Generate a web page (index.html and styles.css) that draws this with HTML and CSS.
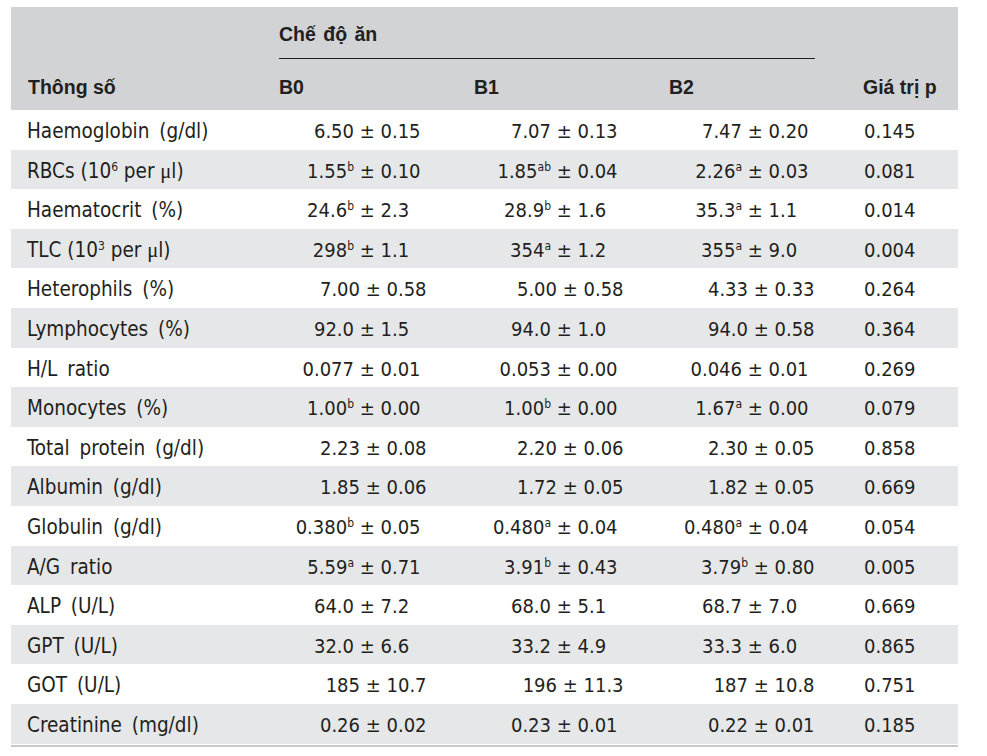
FILE: index.html
```html
<!DOCTYPE html>
<html lang="vi">
<head>
<meta charset="utf-8">
<title>Bảng chỉ số máu</title>
<link rel="stylesheet" href="styles.css">
</head>
<body>
<div class="tbl">
  <div class="thead">
    <div class="group">Chế độ ăn</div>
    <div class="h lab">Thông số</div>
    <div class="h">B0</div>
    <div class="h">B1</div>
    <div class="h">B2</div>
    <div class="h">Giá trị p</div>
  </div>
  <div class="tbody">
    <div class="row"><div class="lab">Haemoglobin (g/dl)</div><div class="v b0"><span class="m">6.50</span> ± 0.15</div><div class="v b1"><span class="m">7.07</span> ± 0.13</div><div class="v b2"><span class="m">7.47</span> ± 0.20</div><div class="p">0.145</div></div>
    <div class="row"><div class="lab tight">RBCs (10<span class="sup">6</span> per <span class="mu">μ</span>l)</div><div class="v b0"><span class="m">1.55<span class="sup">b</span></span> ± 0.10</div><div class="v b1"><span class="m">1.85<span class="sup">ab</span></span> ± 0.04</div><div class="v b2"><span class="m">2.26<span class="sup">a</span></span> ± 0.03</div><div class="p">0.081</div></div>
    <div class="row"><div class="lab">Haematocrit (%)</div><div class="v b0"><span class="m">24.6<span class="sup">b</span></span> ± 2.3</div><div class="v b1"><span class="m">28.9<span class="sup">b</span></span> ± 1.6</div><div class="v b2"><span class="m">35.3<span class="sup">a</span></span> ± 1.1</div><div class="p">0.014</div></div>
    <div class="row"><div class="lab tight">TLC (10<span class="sup">3</span> per <span class="mu">μ</span>l)</div><div class="v b0"><span class="m">298<span class="sup">b</span></span> ± 1.1</div><div class="v b1"><span class="m">354<span class="sup">a</span></span> ± 1.2</div><div class="v b2"><span class="m">355<span class="sup">a</span></span> ± 9.0</div><div class="p">0.004</div></div>
    <div class="row"><div class="lab">Heterophils (%)</div><div class="v b0 nudge"><span class="m">7.00</span> ± 0.58</div><div class="v b1 nudge"><span class="m">5.00</span> ± 0.58</div><div class="v b2 nudge"><span class="m">4.33</span> ± 0.33</div><div class="p">0.264</div></div>
    <div class="row"><div class="lab">Lymphocytes (%)</div><div class="v b0"><span class="m">92.0</span> ± 1.5</div><div class="v b1"><span class="m">94.0</span> ± 1.0</div><div class="v b2 nudge"><span class="m">94.0</span> ± 0.58</div><div class="p">0.364</div></div>
    <div class="row"><div class="lab">H/L ratio</div><div class="v b0"><span class="m">0.077</span> ± 0.01</div><div class="v b1"><span class="m">0.053</span> ± 0.00</div><div class="v b2"><span class="m">0.046</span> ± 0.01</div><div class="p">0.269</div></div>
    <div class="row"><div class="lab">Monocytes (%)</div><div class="v b0"><span class="m">1.00<span class="sup">b</span></span> ± 0.00</div><div class="v b1"><span class="m">1.00<span class="sup">b</span></span> ± 0.00</div><div class="v b2"><span class="m">1.67<span class="sup">a</span></span> ± 0.00</div><div class="p">0.079</div></div>
    <div class="row"><div class="lab">Total protein (g/dl)</div><div class="v b0 nudge"><span class="m">2.23</span> ± 0.08</div><div class="v b1 nudge"><span class="m">2.20</span> ± 0.06</div><div class="v b2 nudge"><span class="m">2.30</span> ± 0.05</div><div class="p">0.858</div></div>
    <div class="row"><div class="lab">Albumin (g/dl)</div><div class="v b0 nudge"><span class="m">1.85</span> ± 0.06</div><div class="v b1 nudge"><span class="m">1.72</span> ± 0.05</div><div class="v b2 nudge"><span class="m">1.82</span> ± 0.05</div><div class="p">0.669</div></div>
    <div class="row"><div class="lab">Globulin (g/dl)</div><div class="v b0"><span class="m">0.380<span class="sup">b</span></span> ± 0.05</div><div class="v b1"><span class="m">0.480<span class="sup">a</span></span> ± 0.04</div><div class="v b2"><span class="m">0.480<span class="sup">a</span></span> ± 0.04</div><div class="p">0.054</div></div>
    <div class="row"><div class="lab">A/G ratio</div><div class="v b0"><span class="m">5.59<span class="sup">a</span></span> ± 0.71</div><div class="v b1"><span class="m">3.91<span class="sup">b</span></span> ± 0.43</div><div class="v b2 nudge"><span class="m">3.79<span class="sup">b</span></span> ± 0.80</div><div class="p">0.005</div></div>
    <div class="row"><div class="lab">ALP (U/L)</div><div class="v b0"><span class="m">64.0</span> ± 7.2</div><div class="v b1"><span class="m">68.0</span> ± 5.1</div><div class="v b2"><span class="m">68.7</span> ± 7.0</div><div class="p">0.669</div></div>
    <div class="row"><div class="lab">GPT (U/L)</div><div class="v b0"><span class="m">32.0</span> ± 6.6</div><div class="v b1"><span class="m">33.2</span> ± 4.9</div><div class="v b2"><span class="m">33.3</span> ± 6.0</div><div class="p">0.865</div></div>
    <div class="row"><div class="lab">GOT (U/L)</div><div class="v b0 nudge"><span class="m">185</span> ± 10.7</div><div class="v b1 nudge"><span class="m">196</span> ± 11.3</div><div class="v b2 nudge"><span class="m">187</span> ± 10.8</div><div class="p">0.751</div></div>
    <div class="row"><div class="lab">Creatinine (mg/dl)</div><div class="v b0 nudge"><span class="m">0.26</span> ± 0.02</div><div class="v b1"><span class="m">0.23</span> ± 0.01</div><div class="v b2 nudge"><span class="m">0.22</span> ± 0.01</div><div class="p">0.185</div></div>
  </div>
</div>
</body>
</html>
```

FILE: styles.css
```css
html, body {
  margin: 0;
  padding: 0;
  background: #ffffff;
}

body {
  color: #231f20;
  font-family: "DejaVu Sans Condensed", "DejaVu Sans", Verdana, sans-serif;
  font-stretch: condensed;
  font-size: 20px;
}

.tbl {
  margin: 7px 0 0 11px;
  width: 947px;
  padding-bottom: 1px;
  border-bottom: 2px solid #c7c8ca;
}

.thead {
  background: #d1d3d4;
  height: 103px;
  display: grid;
  grid-template-columns: 268px 195px 195px 194px 95px;
  grid-template-rows: 52px 51px;
  font-family: "Liberation Sans", Arial, sans-serif;
  font-stretch: normal;
  font-weight: bold;
  font-size: 19.5px;
  line-height: 24px;
}

.group {
  grid-column: 2 / 5;
  grid-row: 1;
  width: 536px;
  box-sizing: border-box;
  height: 52px;
  padding-top: 15px;
  border-bottom: 1px solid #231f20;
  word-spacing: 2px;
}

.h {
  grid-row: 2;
  padding-top: 16px;
}

.thead .lab {
  padding-left: 17px;
  font-size: 19.5px;
  word-spacing: 0;
}

.row {
  display: grid;
  grid-template-columns: 268px 195px 195px 194px 95px;
  box-sizing: border-box;
  height: 39.6px;
  padding-top: 3px;
  line-height: 36.6px;
  white-space: nowrap;
}

.row:nth-child(even) {
  background: #e6e7e8;
}

.lab {
  padding-left: 16px;
  font-size: 20.5px;
  word-spacing: 4px;
}

.lab.tight {
  word-spacing: 0;
}

.m {
  display: inline-block;
  text-align: right;
}

.b0 .m { width: 75px; }
.b1 .m { width: 77px; }
.b2 .m { width: 73px; }

.nudge {
  padding-left: 6px;
}

.p {
  padding-left: 1px;
}

.sup {
  font-size: 12px;
  line-height: 0;
  vertical-align: 7px;
}

.mu {
  font-family: "Liberation Serif", "Times New Roman", serif;
  font-stretch: normal;
}
```
